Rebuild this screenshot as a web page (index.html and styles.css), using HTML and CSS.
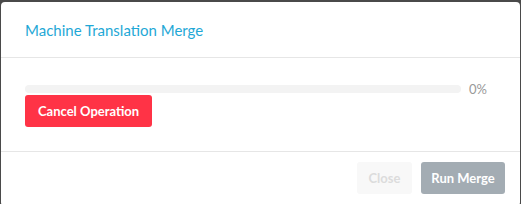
FILE: index.html
```html
<!DOCTYPE html>
<html>
<head>
<meta charset="utf-8">
<link rel="stylesheet" href="styles.css">
</head>
<body>
<div class="modal">
  <div class="modal-header">
    <h5 class="modal-title">Machine Translation Merge</h5>
  </div>
  <div class="modal-body">
    <div class="progress-row">
      <div class="progress"><div class="progress-fill" style="width:0%"></div></div>
      <span class="progress-label">0%</span>
    </div>
    <button class="btn btn-danger">Cancel Operation</button>
  </div>
  <div class="modal-footer">
    <button class="btn btn-light">Close</button>
    <button class="btn btn-secondary">Run Merge</button>
  </div>
</div>
</body>
</html>
```
FILE: styles.css
```css
html, body {
  margin: 0;
  padding: 0;
  height: 100%;
  background: #4a4a4a;
}
body {
  font-family: Lato, "Open Sans", sans-serif;
  overflow: hidden;
}
.modal {
  margin: 2px 1px 0 1px;
  background: #fff;
  border-radius: 4px;
  height: 204px;
  box-sizing: border-box;
}
.modal-header {
  height: 55px;
  padding: 0 24px;
  display: flex;
  align-items: center;
  border-bottom: 1px solid #e6e6e6;
}
.modal-title {
  margin: 0;
  font-size: 15px;
  font-weight: 400;
  color: #1fa8d6;
}
.modal-body {
  padding: 27px 24px 24px 24px;
}
.progress-row {
  display: flex;
  align-items: center;
  gap: 8px;
  height: 8px;
}
.progress {
  flex: 1;
  height: 8px;
  background: #f3f3f3;
  border-radius: 4px;
  overflow: hidden;
}
.progress-fill {
  height: 100%;
  background: #1fa8d6;
}
.progress-label {
  font-size: 13px;
  color: #999;
  width: 27px;
}
.btn {
  font-family: inherit;
  font-size: 13px;
  font-weight: 700;
  border: none;
  border-radius: 3px;
  height: 32px;
  padding: 0 13px;
  cursor: pointer;
}
.btn-danger {
  margin-top: 2px;
  background: #ff3346;
  color: #fff;
}
.modal-footer {
  border-top: 1px solid #e6e6e6;
  display: flex;
  justify-content: flex-end;
  gap: 9px;
  padding: 10px 15px 10px 0;
}
.btn-light {
  background: #f8f8f8;
  color: #dcdcdc;
  width: 55px;
  padding: 0;
}
.btn-secondary {
  background: #a3acb3;
  color: #fff;
  width: 84px;
  padding: 0;
}
```
